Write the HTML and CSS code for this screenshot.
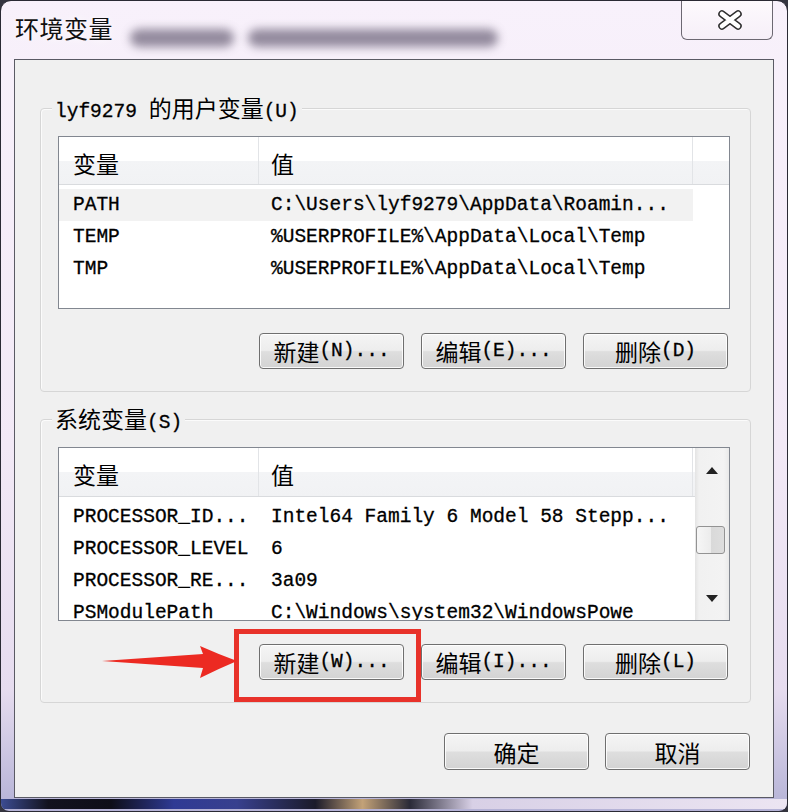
FILE: index.html
```html
<!DOCTYPE html>
<html lang="zh-CN">
<head>
<meta charset="utf-8">
<title>环境变量</title>
<link rel="stylesheet" href="styles.css">
</head>
<body>
<div class="window">
  <div class="titlebar">
    <div class="title">环境变量</div>
    <div class="blur"><span class="b1"></span><span class="b2"></span></div>
    <div class="close">
      <svg width="26" height="20" viewBox="0 0 26 20">
        <g stroke-linecap="round" fill="none">
          <path d="M5 4 L21 16 M21 4 L5 16" stroke="#2e2e2e" stroke-width="7.5"/>
          <path d="M5 4 L21 16 M21 4 L5 16" stroke="#ffffff" stroke-width="4.6"/>
        </g>
      </svg>
    </div>
  </div>
  <div class="client">
    <div class="group g1">
      <div class="glabel"><span class="m">lyf9279 </span>的用户变量<span class="m">(U)</span></div>
      <div class="list l1">
        <div class="lhead">
          <div class="hc c1">变量</div>
          <div class="hc c2">值</div>
          <div class="hc fill"></div>
        </div>
        <div class="rows">
          <div class="row sel"><div class="c1">PATH</div><div class="c2">C:\Users\lyf9279\AppData\Roamin...</div></div>
          <div class="row"><div class="c1">TEMP</div><div class="c2">%USERPROFILE%\AppData\Local\Temp</div></div>
          <div class="row"><div class="c1">TMP</div><div class="c2">%USERPROFILE%\AppData\Local\Temp</div></div>
        </div>
      </div>
      <div class="btns">
        <div class="btn">新建<span class="m">(N)...</span></div>
        <div class="btn">编辑<span class="m">(E)...</span></div>
        <div class="btn">删除<span class="m">(D)</span></div>
      </div>
    </div>
    <div class="group g2">
      <div class="glabel">系统变量<span class="m">(S)</span></div>
      <div class="list l2">
        <div class="lmain">
          <div class="lhead">
            <div class="hc c1">变量</div>
            <div class="hc c2">值</div>
          </div>
          <div class="rows">
            <div class="row"><div class="c1">PROCESSOR_ID...</div><div class="c2">Intel64 Family 6 Model 58 Stepp...</div></div>
            <div class="row"><div class="c1">PROCESSOR_LEVEL</div><div class="c2">6</div></div>
            <div class="row"><div class="c1">PROCESSOR_RE...</div><div class="c2">3a09</div></div>
            <div class="row"><div class="c1">PSModulePath</div><div class="c2">C:\Windows\system32\WindowsPowe</div></div>
          </div>
        </div>
        <div class="sbar">
          <div class="sb-btn"><svg width="12" height="7" viewBox="0 0 12 7"><polygon points="6,0 12,7 0,7" fill="#222"/></svg></div>
          <div class="sb-gap1"></div>
          <div class="thumb"></div>
          <div class="sb-gap2"></div>
          <div class="sb-btn"><svg width="12" height="7" viewBox="0 0 12 7"><polygon points="0,0 12,0 6,7" fill="#222"/></svg></div>
        </div>
      </div>
      <div class="btns">
        <div class="btn">新建<span class="m">(W)...</span></div>
        <div class="btn">编辑<span class="m">(I)...</span></div>
        <div class="btn">删除<span class="m">(L)</span></div>
      </div>
    </div>
    <div class="okrow">
      <div class="btn big">确定</div>
      <div class="btn big">取消</div>
    </div>
  </div>
  <div class="frame-bottom"></div>
  <div class="mark"></div>
  <svg class="arrow" width="140" height="50" viewBox="0 0 140 50">
    <path d="M2 23 L103 16 L100 8 Q118 16 137 23 Q118 31 100 40 L103 30 Z" fill="#ec2a22"/>
  </svg>
</div>
</body>
</html>
```

FILE: styles.css
```css
* { box-sizing: border-box; }
html, body { margin: 0; padding: 0; }
body {
  width: 788px;
  height: 812px;
  overflow: hidden;
  background: #34343f;
  font-family: "Noto Sans CJK SC", sans-serif;
  color: #000;
}
.window {
  position: relative;
  width: 788px;
  height: 812px;
  border: 1px solid #2a2a34;
  border-radius: 11px 11px 9px 9px;
  background: linear-gradient(180deg, #f8f1fb 0%, #f2e9f6 55%, #e6dcef 85%, #b4b2d6 100%);
  display: flex;
  flex-direction: column;
  overflow: hidden;
}
.titlebar {
  height: 58px;
  flex: none;
  display: flex;
  align-items: flex-start;
}
.title {
  margin: 11px 0 0 14px;
  font-size: 24px;
  line-height: 32px;
  letter-spacing: 0.5px;
  color: #111;
  text-shadow: 0 0 8px rgba(255, 255, 255, 0.9);
}
.blur {
  display: flex;
  gap: 14px;
  margin: 28px 0 0 17px;
  filter: blur(5px);
  opacity: 0.8;
}
.blur span {
  height: 18px;
  border-radius: 9px;
  background: #7a7186;
}
.b1 { width: 104px; }
.b2 { width: 250px; }
.close {
  margin-left: auto;
  margin-right: 14px;
  width: 92px;
  height: 39px;
  border: 1px solid #6c6872;
  border-top: none;
  border-radius: 0 0 6px 6px;
  background: linear-gradient(180deg, #fdfafd, #f6eff8);
  display: flex;
  align-items: center;
  justify-content: center;
  padding-left: 6px;
}
.client {
  flex: none;
  margin-left: 13px;
  width: 760px;
  height: 739px;
  border: 1px solid #5a5a64;
  background: #f0f0f0;
  display: flex;
  flex-direction: column;
}
.group {
  margin-left: 25px;
  width: 711px;
  border: 1px solid #d6d6d6;
  border-radius: 4px;
  box-shadow: inset 1px 1px 0 #fbfbfb;
  display: flex;
  flex-direction: column;
  padding: 0 20px 22px 17px;
}
.g1 { margin-top: 48px; }
.g2 { margin-top: 27px; }
.glabel {
  align-self: flex-start;
  margin: -16px 0 0 -6px;
  padding: 0 3px;
  height: 30px;
  line-height: 28px;
  font-size: 23px;
  background: #f0f0f0;
  white-space: pre;
}
.m {
  font-family: "Liberation Mono", "Noto Sans CJK SC", monospace;
  font-size: 19.5px;
  -webkit-text-stroke: 0.3px #000;
}
.list {
  margin-top: 13px;
  border: 1px solid #828790;
  background: #fff;
  overflow: hidden;
  display: flex;
}
.l1 { height: 173px; flex-direction: column; }
.l2 { height: 174px; flex-direction: row; }
.lmain {
  flex: 1;
  min-width: 0;
  display: flex;
  flex-direction: column;
}
.lhead {
  flex: none;
  display: flex;
  height: 48px;
  border-bottom: 1px solid #d9dbde;
  background: linear-gradient(180deg, #ffffff 0%, #ffffff 50%, #f3f4f6 51%, #f1f2f4 100%);
}
.l2 .lhead { height: 49px; }
.hc {
  font-size: 23px;
  line-height: 46px;
  padding-top: 3px;
  border-right: 1px solid #e2e4e7;
}
.c1 { width: 200px; flex: none; padding-left: 14px; }
.c2 { width: 434px; flex: none; padding-left: 12px; }
.fill { flex: 1; border-right: none; }
.rows { padding-top: 4px; overflow: hidden; }
.l2 .rows { padding-top: 4px; }
.row {
  display: flex;
  width: 634px;
  height: 32px;
  line-height: 32px;
  white-space: nowrap;
  font-family: "Liberation Mono", monospace;
  font-size: 19.5px;
  -webkit-text-stroke: 0.3px #000;
}
.row .c1, .row .c2 { overflow: hidden; }
.row.sel { background: #f2f2f2; }
.sbar {
  width: 34px;
  flex: none;
  display: flex;
  flex-direction: column;
  background: linear-gradient(90deg, #e4e4e4 0%, #f1f1f1 12%, #f3f3f3 85%, #e9e9e9 100%);
}
.sb-btn {
  height: 44px;
  flex: none;
  display: flex;
  align-items: center;
  justify-content: center;
}
.sb-gap1 { height: 34px; flex: none; }
.sb-gap2 { flex: 1; }
.thumb {
  height: 28px;
  flex: none;
  margin: 0 4px 0 1px;
  border: 1px solid #939393;
  border-radius: 3px;
  background: linear-gradient(90deg, #f6f6f6 0%, #ececec 50%, #d9d9d9 51%, #dedede 100%);
}
.btns {
  margin-top: 24px;
  padding-right: 2px;
  display: flex;
  justify-content: flex-end;
  gap: 17px;
}
.g2 .btns { margin-top: 23px; }
.btn {
  width: 145px;
  height: 36px;
  border: 1px solid #6f6f6f;
  border-radius: 4px;
  background: linear-gradient(180deg, #f5f5f5 0%, #ededed 48%, #dedede 52%, #d3d3d3 100%);
  box-shadow: inset 0 0 0 1px rgba(255, 255, 255, 0.85);
  display: flex;
  align-items: center;
  justify-content: center;
  font-size: 23px;
  line-height: 30px;
  white-space: pre;
}
.okrow {
  margin-top: 30px;
  margin-right: 23px;
  display: flex;
  justify-content: flex-end;
  gap: 16px;
}
.btn.big { height: 37px; }
.frame-bottom {
  flex: 1;
  margin: 1px 0 2px 0;
  background: linear-gradient(90deg, #3c4c92 0%, #12121e 6%, #0e0e18 14%, #2f3a94 22%, #38408e 30%, #1b1b2a 40%, #c3a278 46%, #2a2a38 52%, #d8d0e6 60%, #ece5f2 100%);
}
.mark {
  position: absolute;
  left: 233px;
  top: 628px;
  width: 187px;
  height: 73px;
  border: 5px solid #e8322a;
}
.arrow {
  position: absolute;
  left: 99px;
  top: 637px;
}
```
